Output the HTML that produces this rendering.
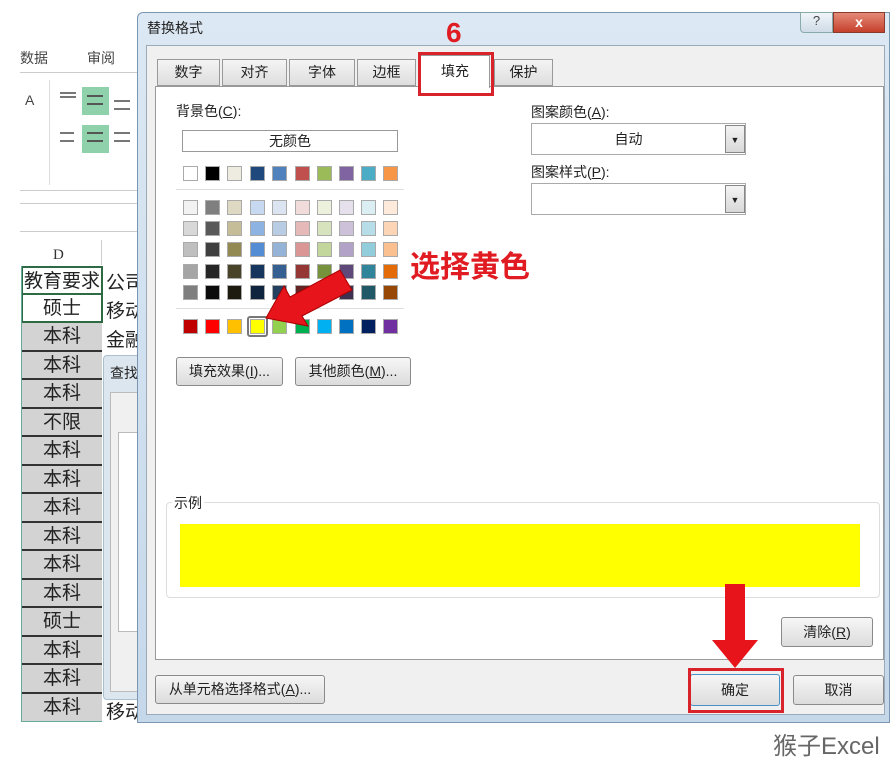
<!DOCTYPE html>
<html><head><meta charset="utf-8">
<style>
*{margin:0;padding:0;box-sizing:border-box}
body{width:890px;height:757px;background:#fff;position:relative;overflow:hidden;font-family:"Liberation Sans","Noto Sans CJK SC",sans-serif;color:#222}
.a{position:absolute}
.t{font-size:14px;white-space:nowrap}
.btn{position:absolute;border:1px solid #8a8a8a;border-radius:3px;background:linear-gradient(#f6f6f6,#dcdcdc);font-size:14px;text-align:center;white-space:nowrap}
.cell{position:absolute;left:22px;width:80px;height:28.5px;border-bottom:2px solid #333;background:#d3d3d3;font-size:19px;text-align:center;line-height:27px;color:#222}
.sw{position:absolute;width:15px;height:15px;border:1px solid #aaa}
</style></head><body>
<div class="a t" style="left:20px;top:48px;font-size:14px;color:#444">数据</div>
<div class="a t" style="left:87px;top:48px;font-size:14px;color:#444">审阅</div>
<div class="a" style="left:20px;top:72px;width:120px;height:1px;background:#ccc"></div>
<div class="a t" style="left:25px;top:92px;font-size:14px;color:#444">A</div>
<div class="a" style="left:82px;top:87px;width:27px;height:28px;background:#8fd1ab"></div>
<div class="a" style="left:82px;top:125px;width:27px;height:28px;background:#8fd1ab"></div>
<div class="a" style="left:60px;top:92px;width:16px;height:6px;border-top:2px solid #777;border-bottom:2px solid #777"></div>
<div class="a" style="left:87px;top:95px;width:16px;height:10px;border-top:2px solid #555;border-bottom:2px solid #555"></div>
<div class="a" style="left:114px;top:100px;width:16px;height:10px;border-top:2px solid #777;border-bottom:2px solid #777"></div>
<div class="a" style="left:60px;top:132px;width:14px;height:10px;border-top:2px solid #777;border-bottom:2px solid #777"></div>
<div class="a" style="left:87px;top:132px;width:16px;height:10px;border-top:2px solid #555;border-bottom:2px solid #555"></div>
<div class="a" style="left:114px;top:132px;width:16px;height:10px;border-top:2px solid #777;border-bottom:2px solid #777"></div>
<div class="a" style="left:49px;top:80px;width:1px;height:105px;background:#ddd"></div>
<div class="a" style="left:20px;top:190px;width:120px;height:1px;background:#ccc"></div>
<div class="a" style="left:20px;top:203px;width:120px;height:1px;background:#ccc"></div>
<div class="a" style="left:20px;top:231px;width:120px;height:1px;background:#ccc"></div>
<div class="a t" style="left:53px;top:247px;font-family:'Liberation Serif',serif;font-size:15px;color:#333">D</div>
<div class="a" style="left:101px;top:240px;width:1px;height:25px;background:#ccc"></div>
<div class="cell" style="top:266px;background:#fff;border:2px solid #2e6b45;left:21px;width:82px">教育要求</div>
<div class="cell" style="top:294.5px;background:#fff;border:2px solid #2e6b45;border-top:none;left:21px;width:82px">硕士</div>
<div class="cell" style="top:323px">本科</div>
<div class="cell" style="top:351.5px">本科</div>
<div class="cell" style="top:380px">本科</div>
<div class="cell" style="top:408.5px">不限</div>
<div class="cell" style="top:437px">本科</div>
<div class="cell" style="top:465.5px">本科</div>
<div class="cell" style="top:494px">本科</div>
<div class="cell" style="top:522.5px">本科</div>
<div class="cell" style="top:551px">本科</div>
<div class="cell" style="top:579.5px">本科</div>
<div class="cell" style="top:608px">硕士</div>
<div class="cell" style="top:636.5px">本科</div>
<div class="cell" style="top:665px">本科</div>
<div class="cell" style="top:693.5px;border-bottom:1px solid #6a9">本科</div>
<div class="a" style="left:21px;top:266px;width:1px;height:456px;background:#6a9"></div>
<div class="a t" style="left:106px;top:268px;font-size:19px">公司</div>
<div class="a t" style="left:106px;top:296px;font-size:19px">移动</div>
<div class="a t" style="left:106px;top:325px;font-size:19px">金融</div>
<div class="a t" style="left:106px;top:697px;font-size:19px">移动</div>
<div class="a" style="left:103px;top:355px;width:45px;height:345px;background:#dbe6ee;border:1px solid #a9c0d0;border-radius:4px"></div>
<div class="a t" style="left:110px;top:363px;font-size:14px">查找</div>
<div class="a" style="left:110px;top:392px;width:40px;height:300px;background:#f0f0f0;border:1px solid #bbb"></div>
<div class="a" style="left:118px;top:432px;width:30px;height:200px;background:#fff;border:1px solid #bbb"></div>
<div class="a" style="left:137px;top:12px;width:753px;height:711px;background:linear-gradient(#dce8f3,#c5d8ea);border:1px solid #7a96b0;border-radius:6px 0 0 0"></div>
<div class="a t" style="left:147px;top:18px;font-size:14px">替换格式</div>
<div class="a" style="left:800px;top:12px;width:33px;height:21px;border:1px solid #8aa;border-radius:0 0 0 4px;background:linear-gradient(#f0f5fa,#cfdbe7);text-align:center;font-size:13px;color:#444">?</div>
<div class="a" style="left:833px;top:12px;width:52px;height:21px;background:linear-gradient(#e58a78,#c4402c);border:1px solid #8a3a2a;text-align:center;color:#fff;font-size:14px;font-weight:bold;line-height:19px">x</div>
<div class="a" style="left:146px;top:45px;width:739px;height:670px;background:#f0f0f0;border:1px solid #9aaab8"></div>
<div class="a" style="left:157px;top:59px;width:63px;height:27px;background:linear-gradient(#f4f4f4,#dedede);border:1px solid #999;text-align:center;font-size:14px;line-height:25px">数字</div>
<div class="a" style="left:222px;top:59px;width:65px;height:27px;background:linear-gradient(#f4f4f4,#dedede);border:1px solid #999;text-align:center;font-size:14px;line-height:25px">对齐</div>
<div class="a" style="left:289px;top:59px;width:66px;height:27px;background:linear-gradient(#f4f4f4,#dedede);border:1px solid #999;text-align:center;font-size:14px;line-height:25px">字体</div>
<div class="a" style="left:357px;top:59px;width:59px;height:27px;background:linear-gradient(#f4f4f4,#dedede);border:1px solid #999;text-align:center;font-size:14px;line-height:25px">边框</div>
<div class="a" style="left:494px;top:59px;width:59px;height:27px;background:linear-gradient(#f4f4f4,#dedede);border:1px solid #999;text-align:center;font-size:14px;line-height:25px">保护</div>
<div class="a" style="left:155px;top:86px;width:729px;height:574px;background:#fff;border:1px solid #999"></div>
<div class="a" style="left:420px;top:55px;width:70px;height:33px;background:#fff;border:1px solid #999;border-bottom:none;text-align:center;font-size:14px;line-height:30px">填充</div>
<div class="a" style="left:418px;top:52px;width:76px;height:44px;border:3px solid #d9232a"></div>
<div class="a" style="left:446px;top:17px;font-size:28px;font-weight:bold;color:#e01b22">6</div>
<div class="a t" style="left:176px;top:101px">背景色(<u>C</u>):</div>
<div class="a" style="left:182px;top:130px;width:216px;height:22px;border:1px solid #999;text-align:center;font-size:14px;line-height:20px">无颜色</div>
<div class="a" style="left:176px;top:189px;width:228px;height:1px;background:#ddd"></div>
<div class="a" style="left:176px;top:308px;width:228px;height:1px;background:#ddd"></div>
<div id="sw"></div>
<div class="a" style="left:247px;top:316px;width:21px;height:21px;border:2px solid #777;border-radius:3px"></div>
<div class="btn" style="left:176px;top:357px;width:107px;height:29px;line-height:27px">填充效果(<u>I</u>)...</div>
<div class="btn" style="left:295px;top:357px;width:116px;height:29px;line-height:27px">其他颜色(<u>M</u>)...</div>
<div class="a" style="left:410px;top:242px;font-size:30px;font-weight:bold;color:#e01b22;white-space:nowrap">选择黄色</div>
<svg class="a" style="left:260px;top:266px" width="100" height="62"><polygon points="6,52 24,20 30,31 80,4 92,24 42,50 48,60" fill="#e8141b" stroke="#a00" stroke-width="1"/></svg>
<div class="a t" style="left:531px;top:102px">图案颜色(<u>A</u>):</div>
<div class="a" style="left:531px;top:123px;width:215px;height:32px;border:1px solid #aaa;background:#fff;text-align:center;font-size:14px;line-height:30px;padding-right:20px">自动</div>
<div class="a" style="left:725px;top:125px;width:20px;height:28px;border:1px solid #888;background:linear-gradient(#f4f4f4,#d8d8d8);text-align:center;font-size:9px;line-height:28px">▼</div>
<div class="a t" style="left:531px;top:162px">图案样式(<u>P</u>):</div>
<div class="a" style="left:531px;top:183px;width:215px;height:32px;border:1px solid #aaa;background:#fff"></div>
<div class="a" style="left:725px;top:185px;width:20px;height:28px;border:1px solid #888;background:linear-gradient(#f4f4f4,#d8d8d8);text-align:center;font-size:9px;line-height:28px">▼</div>
<div class="a" style="left:166px;top:502px;width:714px;height:96px;border:1px solid #ddd;border-radius:4px"></div>
<div class="a t" style="left:172px;top:493px;background:#fff;padding:0 2px">示例</div>
<div class="a" style="left:180px;top:524px;width:680px;height:63px;background:#ffff00"></div>
<div class="btn" style="left:781px;top:617px;width:92px;height:30px;line-height:28px">清除(<u>R</u>)</div>
<div class="btn" style="left:155px;top:675px;width:170px;height:29px;line-height:27px">从单元格选择格式(<u>A</u>)...</div>
<div class="btn" style="left:690px;top:674px;width:90px;height:32px;line-height:30px;border-color:#4a90c8">确定</div>
<div class="btn" style="left:793px;top:675px;width:91px;height:30px;line-height:28px">取消</div>
<div class="a" style="left:688px;top:668px;width:96px;height:45px;border:3px solid #d9232a"></div>
<svg class="a" style="left:710px;top:584px" width="50" height="86"><polygon points="15,0 35,0 35,56 48,56 25,84 2,56 15,56" fill="#e8141b"/></svg>
<div class="a t" style="left:773px;top:726px;font-size:24px;color:#666">猴子Excel</div>
<script>
var rows=[[166,["#fff","#000","#eeece1","#1f497d","#4f81bd","#c0504d","#9bbb59","#8064a2","#4bacc6","#f79646"]],
[200,["#f2f2f2","#7f7f7f","#ddd9c3","#c6d9f0","#dbe5f1","#f2dcdb","#ebf1dd","#e5e0ec","#dbeef3","#fdeada"]],
[221,["#d8d8d8","#595959","#c4bd97","#8db3e2","#b8cce4","#e5b9b7","#d7e3bc","#ccc1d9","#b7dde8","#fbd5b5"]],
[242,["#bfbfbf","#3f3f3f","#938953","#548dd4","#95b3d7","#d99694","#c3d69b","#b2a2c7","#92cddc","#fac08f"]],
[264,["#a5a5a5","#262626","#494429","#17365d","#366092","#953734","#76923c","#5f497a","#31859b","#e36c09"]],
[285,["#7f7f7f","#0c0c0c","#1d1b10","#0f243e","#244061","#632423","#4f6128","#3f3151","#205867","#974806"]],
[319,["#c00000","#ff0000","#ffc000","#ffff00","#92d050","#00b050","#00b0f0","#0070c0","#002060","#7030a0"]]];
var xs=[183,205,227,250,272,295,317,339,361,383],h="";
rows.forEach(function(r){r[1].forEach(function(c,i){h+='<div class="sw" style="left:'+xs[i]+'px;top:'+r[0]+'px;background:'+c+'"></div>';});});
document.getElementById("sw").innerHTML=h;
</script>
</body></html>
